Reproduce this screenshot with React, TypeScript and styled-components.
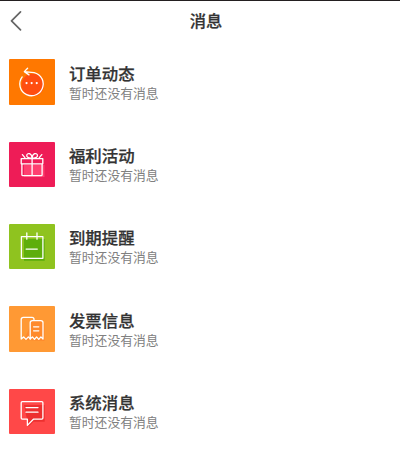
import React, { FC, ReactNode } from "react";
import styled, { createGlobalStyle } from "styled-components";

const GlobalStyle = createGlobalStyle`
  body {
    margin: 0;
    background: #fff;
    font-family: "Noto Sans CJK SC", sans-serif;
  }
`;

const Page = styled.div`
  box-sizing: border-box;
  height: 475px;
  border-top: 1px solid #231f20;
  overflow: hidden;
`;

const Header = styled.header`
  display: grid;
  grid-template-columns: 40px 1fr 40px;
  align-items: center;
  height: 38px;
`;

const BackButton = styled.button`
  display: flex;
  padding: 0 0 0 9px;
  border: 0;
  background: none;
`;

const Title = styled.h1`
  margin: 0;
  padding-left: 12px;
  color: #333;
  font-size: 16.3px;
  font-weight: 500;
  line-height: 24px;
  text-align: center;
  -webkit-text-stroke: 0.25px #333;
`;

const List = styled.ul`
  display: flex;
  flex-direction: column;
  gap: 36.9px;
  margin: 0;
  padding: 20.2px 9.3px 0;
  list-style: none;
`;

const Item = styled.li`
  display: flex;
  gap: 14.2px;
  height: 45.5px;
`;

const Tile = styled.div<{ $color: string }>`
  width: 45.5px;
  height: 45.5px;
  border-radius: 1px;
  background: ${({ $color }) => $color};
`;

const Icon = styled.svg`
  display: block;
  fill: none;
  stroke: #fff;
  stroke-width: 1.3;
  stroke-linejoin: round;
  stroke-linecap: round;
`;

const Content = styled.div`
  padding-top: 2.4px;
`;

const Name = styled.div`
  color: #333;
  font-size: 16.4px;
  font-weight: 500;
  line-height: 22px;
  -webkit-text-stroke: 0.25px #333;
`;

const Summary = styled.div`
  color: #808080;
  font-size: 12.8px;
  line-height: 18px;
`;

interface Message {
  name: string;
  color: string;
  icon: ReactNode;
}

const messages: Message[] = [
  {
    name: "订单动态",
    color: "#ff7800",
    icon: (
      <>
        <circle cx="23.7" cy="26" r="11.2" fill="#ff4e10" stroke="none" />
        <path d="M13.2 17.9A11.7 11.7 0 1 0 22.4 13.3L15.6 12.6M18.6 9.2L15.3 12.6L20 15.9" />
        <path d="M17.5 24.1h.1M22.6 24.1h.1M27.7 24.1h.1" strokeWidth="2.1" />
      </>
    ),
  },
  {
    name: "福利活动",
    color: "#ee1c57",
    icon: (
      <>
        <path d="M15 23h20.5v12H15z" fill="#ff3f70" stroke="none" />
        <path d="M12.2 16.7h21.6v5.1H12.2zM12.9 21.8V32.8Q12.9 33.7 13.8 33.7H32.2Q33.1 33.7 33.1 32.8V21.8M23.1 16.7v17" />
        <path d="M23.1 16C19.5 16.4 17.2 15 17.8 13C18.6 10.5 22.6 11.1 23.1 16C23.6 11.1 27.6 10.5 28.4 13C29 15 26.7 16.4 23.1 16M13.4 12.6L15.9 15.6M32.8 12.6L30.3 15.6" />
      </>
    ),
  },
  {
    name: "到期提醒",
    color: "#8fc31f",
    icon: (
      <>
        <path d="M15 15h20.7v21.8H15z" fill="#5eae0c" stroke="none" />
        <path d="M12.4 12.6h21.5v21.7H12.4zM17.8 9v6.2M28 9v6.2M17.1 25.1h11.2" />
      </>
    ),
  },
  {
    name: "发票信息",
    color: "#ff9934",
    icon: (
      <>
        <path d="M23 16l12.5 1.5V35L15 34z" fill="#ff8a2c" stroke="none" />
        <path d="M25 14.4V13.4Q25 11.3 23 11.3H14.4Q12.2 11.3 12.2 13.5V33L14.6 30.9L17 33.4L19.4 30.9L21.2 32.7" />
        <path
          d="M21.2 33V16.8Q21.2 14.6 23.4 14.6H31.8Q34 14.6 34 16.8V33L31.9 30.9L29.8 33.4L27.6 30.9L25.5 33.4L23.4 30.9Z"
          fill="#ff8a2c"
        />
        <path d="M24.6 20.8h5.2M24.6 24.8h5.2" />
      </>
    ),
  },
  {
    name: "系统消息",
    color: "#ff4848",
    icon: (
      <>
        <path d="M15 16h20.7v16.8H24.5l-5 5z" fill="#ed302f" stroke="none" />
        <path d="M13.3 12.6H32.8Q33.9 12.6 33.9 13.7V29.1Q33.9 30.2 32.8 30.2H24.4L18.4 36.4V30.2H13.3Q12.2 30.2 12.2 29.1V13.7Q12.2 12.6 13.3 12.6Z" />
        <path d="M17 18.6h12M17 23.2h12" />
      </>
    ),
  },
];

const App: FC = () => {
  return (
    <Page>
      <GlobalStyle />
      <Header>
        <BackButton aria-label="返回">
          <Icon
            width="14"
            height="22"
            viewBox="0 0 14 22"
            style={{ stroke: "#666", strokeWidth: 1.7 }}
          >
            <path d="M11.5 2.8L2.5 11.8L11.5 20.8" />
          </Icon>
        </BackButton>
        <Title>消息</Title>
      </Header>
      <List>
        {messages.map(({ name, color, icon }) => (
          <Item key={name}>
            <Tile $color={color}>
              <Icon width="45.5" height="45.5" viewBox="0 0 45.5 45.5">
                {icon}
              </Icon>
            </Tile>
            <Content>
              <Name>{name}</Name>
              <Summary>暂时还没有消息</Summary>
            </Content>
          </Item>
        ))}
      </List>
    </Page>
  );
};

export default App;
